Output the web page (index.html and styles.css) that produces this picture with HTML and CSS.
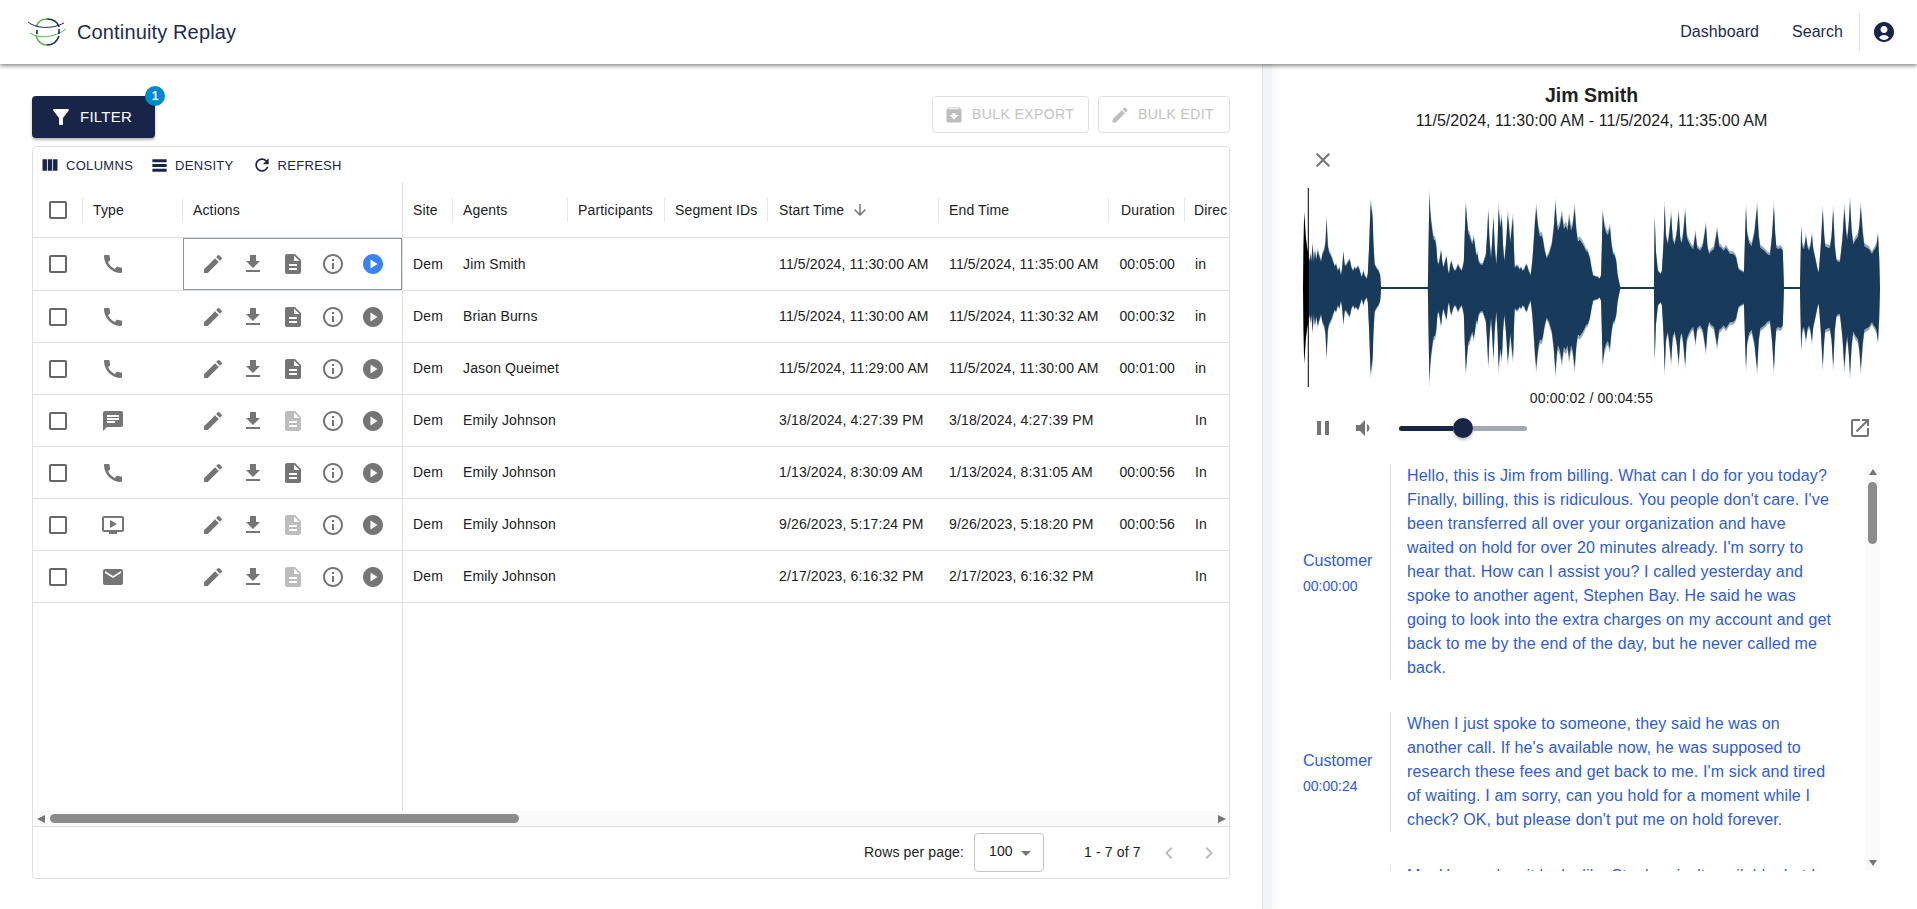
FILE: index.html
```html
<!DOCTYPE html>
<html lang="en">
<head>
<meta charset="utf-8">
<title>Continuity Replay</title>
<link rel="stylesheet" href="styles.css">
</head>
<body>
<svg class="sprite" aria-hidden="true">
  <symbol id="i-edit" viewBox="0 0 24 24"><path d="M3 17.25V21h3.75L17.81 9.94l-3.75-3.75L3 17.25zM20.71 7.04c.39-.39.39-1.02 0-1.41l-2.34-2.34a.9959.9959 0 0 0-1.41 0l-1.83 1.83 3.75 3.75 1.83-1.83z"/></symbol>
  <symbol id="i-down" viewBox="0 0 24 24"><path d="M5 20h14v-2H5v2zM19 9h-4V3H9v6H5l7 7 7-7z"/></symbol>
  <symbol id="i-doc" viewBox="0 0 24 24"><path d="M14 2H6c-1.1 0-1.99.9-1.99 2L4 20c0 1.1.89 2 1.99 2H18c1.1 0 2-.9 2-2V8l-6-6zm2 16H8v-2h8v2zm0-4H8v-2h8v2zm-3-5V3.5L18.5 9H13z"/></symbol>
  <symbol id="i-info" viewBox="0 0 24 24"><path d="M11 7h2v2h-2zm0 4h2v6h-2zm1-9C6.48 2 2 6.48 2 12s4.48 10 10 10 10-4.48 10-10S17.52 2 12 2zm0 18c-4.41 0-8-3.59-8-8s3.59-8 8-8 8 3.59 8 8-3.59 8-8 8z"/></symbol>
  <symbol id="i-play" viewBox="0 0 24 24"><path d="M12 2C6.48 2 2 6.48 2 12s4.48 10 10 10 10-4.48 10-10S17.52 2 12 2zM9.5 16.5v-9l7 4.5-7 4.5z"/></symbol>
  <symbol id="i-call" viewBox="0 0 24 24"><path d="M20.01 15.38c-1.23 0-2.42-.2-3.53-.56-.35-.12-.74-.03-1.01.24l-1.57 1.97c-2.83-1.35-5.48-3.9-6.89-6.83l1.95-1.66c.27-.28.35-.67.24-1.02-.37-1.11-.56-2.3-.56-3.53 0-.54-.45-.99-.99-.99H4.19C3.65 3 3 3.24 3 3.99 3 13.28 10.73 21 20.01 21c.71 0 .99-.63.99-1.18v-3.45c0-.54-.45-.99-.99-.99z"/></symbol>
  <symbol id="i-chat" viewBox="0 0 24 24"><path d="M20 2H4c-1.1 0-1.99.9-1.99 2L2 22l4-4h14c1.1 0 2-.9 2-2V4c0-1.1-.9-2-2-2zM6 9h12v2H6V9zm8 5H6v-2h8v2zm4-6H6V6h12v2z"/></symbol>
  <symbol id="i-video" viewBox="0 0 24 24"><path d="M21 3H3c-1.11 0-2 .89-2 2v12c0 1.1.89 2 2 2h5v2h8v-2h5c1.1 0 1.99-.9 1.99-2L23 5c0-1.11-.9-2-2-2zm0 14H3V5h18v12zm-5-6l-7 4V7z"/></symbol>
  <symbol id="i-mail" viewBox="0 0 24 24"><path d="M20 4H4c-1.1 0-1.99.9-1.99 2L2 18c0 1.1.9 2 2 2h16c1.1 0 2-.9 2-2V6c0-1.1-.9-2-2-2zm0 4l-8 5-8-5V6l8 5 8-5v2z"/></symbol>
  <symbol id="i-box" viewBox="0 0 24 24"><path d="M19 5v14H5V5h14m0-2H5c-1.1 0-2 .9-2 2v14c0 1.1.9 2 2 2h14c1.1 0 2-.9 2-2V5c0-1.1-.9-2-2-2z"/></symbol>
</svg>

<header class="topbar">
  <svg class="logo" viewBox="0 0 40 28" aria-hidden="true">
    <path class="logo-green" d="M9 9C11 3 16 1 20 1"/>
    <path class="logo-navy" d="M20 1C26 1 31 4 32 9"/>
    <path class="logo-green" d="M9 18C11 24 15 27 20 27"/>
    <path class="logo-navy" d="M20 27C26 27 30 24 32 18"/>
    <path class="logo-thin-navy" d="M1 4C8 10 24 12 37 5"/>
    <path class="logo-thin-green" d="M3 15C12 21 27 20 39 11"/>
    <path class="logo-navy" d="M10 12V16M32 11V16"/>
  </svg>
  <div class="brand">Continuity Replay</div>
  <nav class="topnav">
    <a class="nav-dash">Dashboard</a>
    <a class="nav-search">Search</a>
    <span class="nav-divider"></span>
    <svg class="nav-user" viewBox="0 0 24 24" aria-hidden="true"><path d="M12 2C6.48 2 2 6.48 2 12s4.48 10 10 10 10-4.48 10-10S17.52 2 12 2zm0 4c1.93 0 3.5 1.57 3.5 3.5S13.93 13 12 13s-3.5-1.57-3.5-3.5S10.07 6 12 6zm0 14c-2.03 0-3.8-1.01-4.9-2.54.93-1.38 2.4-2.3 4.9-2.46 2.5.16 3.97 1.08 4.9 2.46C15.8 18.99 14.03 20 12 20z"/></svg>
  </nav>
</header>

<main class="workspace">
  <section class="left-pane">
    <div class="actions-bar">
      <button class="filter-btn">
        <svg class="filter-icon" viewBox="0 0 24 24" aria-hidden="true"><path d="M4.25 5.61C6.27 8.2 10 13 10 13v6c0 .55.45 1 1 1h2c.55 0 1-.45 1-1v-6s3.72-4.8 5.74-7.39c.51-.66.04-1.61-.79-1.61H5.04c-.83 0-1.3.95-.79 1.61z"/></svg>
        FILTER
        <span class="filter-badge">1</span>
      </button>
      <div class="bulk-group">
        <button class="bulk-btn bulk-export">
          <svg viewBox="0 0 24 24" aria-hidden="true"><path d="M20.54 5.23l-1.39-1.68C18.88 3.21 18.47 3 18 3H6c-.47 0-.88.21-1.16.55L3.46 5.23C3.17 5.57 3 6.02 3 6.5V19c0 1.1.9 2 2 2h14c1.1 0 2-.9 2-2V6.5c0-.48-.17-.93-.46-1.27zM12 17.5L6.5 12H10v-2h4v2h3.5L12 17.5zM5.12 5l.81-1h12l.94 1H5.12z"/></svg>
          BULK EXPORT
        </button>
        <button class="bulk-btn bulk-edit">
          <svg viewBox="0 0 24 24" aria-hidden="true"><use href="#i-edit"/></svg>
          BULK EDIT
        </button>
      </div>
    </div>

    <div class="grid">
      <div class="grid-toolbar">
        <span class="tool tool-columns"><svg viewBox="0 0 24 24" aria-hidden="true"><path d="M14.67 5v14H9.33V5h5.34zm1 14H21V5h-5.33v14zm-7.34 0V5H3v14h5.33z"/></svg>COLUMNS</span>
        <span class="tool tool-density"><svg viewBox="0 0 24 24" aria-hidden="true"><path d="M21 8H3V4h18v4zm0 2H3v4h18v-4zm0 6H3v4h18v-4z"/></svg>DENSITY</span>
        <span class="tool tool-refresh"><svg viewBox="0 0 24 24" aria-hidden="true"><path d="M17.65 6.35C16.2 4.9 14.21 4 12 4c-4.42 0-7.99 3.58-7.99 8s3.57 8 7.99 8c3.73 0 6.84-2.55 7.73-6h-2.08c-.82 2.33-3.04 4-5.65 4-3.31 0-6-2.69-6-6s2.69-6 6-6c1.66 0 3.14.69 4.22 1.78L13 11h7V4l-2.35 2.35z"/></svg>REFRESH</span>
      </div>

      <div class="grid-body">
        <div class="pinned">
          <div class="head-row">
            <div class="hcell c-check"><svg class="ico check" aria-hidden="true"><use href="#i-box"/></svg></div>
            <div class="hcell c-type">Type</div>
            <div class="hcell c-actions">Actions</div>
          </div>
          <div class="row row-first">
            <div class="cell c-check"><svg class="ico check" aria-hidden="true"><use href="#i-box"/></svg></div>
            <div class="cell c-type"><svg class="ico" aria-hidden="true"><use href="#i-call"/></svg></div>
            <div class="cell c-actions focused"><svg class="ico" aria-hidden="true"><use href="#i-edit"/></svg><svg class="ico" aria-hidden="true"><use href="#i-down"/></svg><svg class="ico" aria-hidden="true"><use href="#i-doc"/></svg><svg class="ico" aria-hidden="true"><use href="#i-info"/></svg><svg class="ico playing" aria-hidden="true"><use href="#i-play"/></svg></div>
          </div>
          <div class="row">
            <div class="cell c-check"><svg class="ico check" aria-hidden="true"><use href="#i-box"/></svg></div>
            <div class="cell c-type"><svg class="ico" aria-hidden="true"><use href="#i-call"/></svg></div>
            <div class="cell c-actions"><svg class="ico" aria-hidden="true"><use href="#i-edit"/></svg><svg class="ico" aria-hidden="true"><use href="#i-down"/></svg><svg class="ico" aria-hidden="true"><use href="#i-doc"/></svg><svg class="ico" aria-hidden="true"><use href="#i-info"/></svg><svg class="ico" aria-hidden="true"><use href="#i-play"/></svg></div>
          </div>
          <div class="row">
            <div class="cell c-check"><svg class="ico check" aria-hidden="true"><use href="#i-box"/></svg></div>
            <div class="cell c-type"><svg class="ico" aria-hidden="true"><use href="#i-call"/></svg></div>
            <div class="cell c-actions"><svg class="ico" aria-hidden="true"><use href="#i-edit"/></svg><svg class="ico" aria-hidden="true"><use href="#i-down"/></svg><svg class="ico" aria-hidden="true"><use href="#i-doc"/></svg><svg class="ico" aria-hidden="true"><use href="#i-info"/></svg><svg class="ico" aria-hidden="true"><use href="#i-play"/></svg></div>
          </div>
          <div class="row">
            <div class="cell c-check"><svg class="ico check" aria-hidden="true"><use href="#i-box"/></svg></div>
            <div class="cell c-type"><svg class="ico" aria-hidden="true"><use href="#i-chat"/></svg></div>
            <div class="cell c-actions"><svg class="ico" aria-hidden="true"><use href="#i-edit"/></svg><svg class="ico" aria-hidden="true"><use href="#i-down"/></svg><svg class="ico off" aria-hidden="true"><use href="#i-doc"/></svg><svg class="ico" aria-hidden="true"><use href="#i-info"/></svg><svg class="ico" aria-hidden="true"><use href="#i-play"/></svg></div>
          </div>
          <div class="row">
            <div class="cell c-check"><svg class="ico check" aria-hidden="true"><use href="#i-box"/></svg></div>
            <div class="cell c-type"><svg class="ico" aria-hidden="true"><use href="#i-call"/></svg></div>
            <div class="cell c-actions"><svg class="ico" aria-hidden="true"><use href="#i-edit"/></svg><svg class="ico" aria-hidden="true"><use href="#i-down"/></svg><svg class="ico" aria-hidden="true"><use href="#i-doc"/></svg><svg class="ico" aria-hidden="true"><use href="#i-info"/></svg><svg class="ico" aria-hidden="true"><use href="#i-play"/></svg></div>
          </div>
          <div class="row">
            <div class="cell c-check"><svg class="ico check" aria-hidden="true"><use href="#i-box"/></svg></div>
            <div class="cell c-type"><svg class="ico" aria-hidden="true"><use href="#i-video"/></svg></div>
            <div class="cell c-actions"><svg class="ico" aria-hidden="true"><use href="#i-edit"/></svg><svg class="ico" aria-hidden="true"><use href="#i-down"/></svg><svg class="ico off" aria-hidden="true"><use href="#i-doc"/></svg><svg class="ico" aria-hidden="true"><use href="#i-info"/></svg><svg class="ico" aria-hidden="true"><use href="#i-play"/></svg></div>
          </div>
          <div class="row">
            <div class="cell c-check"><svg class="ico check" aria-hidden="true"><use href="#i-box"/></svg></div>
            <div class="cell c-type"><svg class="ico" aria-hidden="true"><use href="#i-mail"/></svg></div>
            <div class="cell c-actions"><svg class="ico" aria-hidden="true"><use href="#i-edit"/></svg><svg class="ico" aria-hidden="true"><use href="#i-down"/></svg><svg class="ico off" aria-hidden="true"><use href="#i-doc"/></svg><svg class="ico" aria-hidden="true"><use href="#i-info"/></svg><svg class="ico" aria-hidden="true"><use href="#i-play"/></svg></div>
          </div>
        </div>

        <div class="scroller">
          <div class="head-row">
            <div class="hcell c-site">Site</div>
            <div class="hcell c-agents">Agents</div>
            <div class="hcell c-part">Participants</div>
            <div class="hcell c-seg">Segment IDs</div>
            <div class="hcell c-start">Start Time<svg class="sort-arrow" viewBox="0 0 24 24" aria-hidden="true"><path d="M20 12l-1.41-1.41L13 16.17V4h-2v12.17l-5.58-5.59L4 12l8 8 8-8z"/></svg></div>
            <div class="hcell c-end">End Time</div>
            <div class="hcell c-dur">Duration</div>
            <div class="hcell c-dir">Direc</div>
          </div>
          <div class="row row-first"><div class="cell c-site">Dem</div><div class="cell c-agents">Jim Smith</div><div class="cell c-part"></div><div class="cell c-seg"></div><div class="cell c-start">11/5/2024, 11:30:00 AM</div><div class="cell c-end">11/5/2024, 11:35:00 AM</div><div class="cell c-dur">00:05:00</div><div class="cell c-dir">in</div></div>
          <div class="row"><div class="cell c-site">Dem</div><div class="cell c-agents">Brian Burns</div><div class="cell c-part"></div><div class="cell c-seg"></div><div class="cell c-start">11/5/2024, 11:30:00 AM</div><div class="cell c-end">11/5/2024, 11:30:32 AM</div><div class="cell c-dur">00:00:32</div><div class="cell c-dir">in</div></div>
          <div class="row"><div class="cell c-site">Dem</div><div class="cell c-agents">Jason Queimet</div><div class="cell c-part"></div><div class="cell c-seg"></div><div class="cell c-start">11/5/2024, 11:29:00 AM</div><div class="cell c-end">11/5/2024, 11:30:00 AM</div><div class="cell c-dur">00:01:00</div><div class="cell c-dir">in</div></div>
          <div class="row"><div class="cell c-site">Dem</div><div class="cell c-agents">Emily Johnson</div><div class="cell c-part"></div><div class="cell c-seg"></div><div class="cell c-start">3/18/2024, 4:27:39 PM</div><div class="cell c-end">3/18/2024, 4:27:39 PM</div><div class="cell c-dur"></div><div class="cell c-dir">In</div></div>
          <div class="row"><div class="cell c-site">Dem</div><div class="cell c-agents">Emily Johnson</div><div class="cell c-part"></div><div class="cell c-seg"></div><div class="cell c-start">1/13/2024, 8:30:09 AM</div><div class="cell c-end">1/13/2024, 8:31:05 AM</div><div class="cell c-dur">00:00:56</div><div class="cell c-dir">In</div></div>
          <div class="row"><div class="cell c-site">Dem</div><div class="cell c-agents">Emily Johnson</div><div class="cell c-part"></div><div class="cell c-seg"></div><div class="cell c-start">9/26/2023, 5:17:24 PM</div><div class="cell c-end">9/26/2023, 5:18:20 PM</div><div class="cell c-dur">00:00:56</div><div class="cell c-dir">In</div></div>
          <div class="row"><div class="cell c-site">Dem</div><div class="cell c-agents">Emily Johnson</div><div class="cell c-part"></div><div class="cell c-seg"></div><div class="cell c-start">2/17/2023, 6:16:32 PM</div><div class="cell c-end">2/17/2023, 6:16:32 PM</div><div class="cell c-dur"></div><div class="cell c-dir">In</div></div>
        </div>
      </div>

      <div class="hscroll">
        <span class="arrow-left"></span>
        <span class="hthumb"></span>
        <span class="arrow-right"></span>
      </div>

      <div class="grid-footer">
        <span class="rows-label">Rows per page:</span>
        <span class="rows-select">100<svg viewBox="0 0 24 24" aria-hidden="true"><path d="M7 10l5 5 5-5z"/></svg></span>
        <span class="page-range">1 - 7 of 7</span>
        <svg class="page-btn" viewBox="0 0 24 24" aria-hidden="true"><path d="M15.41 7.41L14 6l-6 6 6 6 1.41-1.41L10.83 12z"/></svg>
        <svg class="page-btn page-next" viewBox="0 0 24 24" aria-hidden="true"><path d="M10 6L8.59 7.41 13.17 12l-4.58 4.59L10 18l6-6z"/></svg>
      </div>
    </div>
  </section>

  <div class="splitter"></div>

  <section class="right-pane">
    <h1 class="call-name">Jim Smith</h1>
    <p class="call-range">11/5/2024, 11:30:00 AM - 11/5/2024, 11:35:00 AM</p>
    <svg class="close-icon" viewBox="0 0 24 24" aria-hidden="true"><path d="M19 6.41L17.59 5 12 10.59 6.41 5 5 6.41 10.59 12 5 17.59 6.41 19 12 13.41 17.59 19 19 17.59 13.41 12z"/></svg>

    <svg class="wave" viewBox="33 25 1442 597" preserveAspectRatio="none" aria-hidden="true">
      <defs>
        <path id="wave-top" d="M47 325 47 225 50 240 52 215 54 240 57 185 60 240 63 205 66 235 70 205 74 225 78 240 82 215 86 205 89 185 92 105 95 190 98 210 104 225 108 240 112 255 116 250 120 270 124 260 128 285 131 260 134 210 137 250 140 255 144 245 150 235 154 260 158 270 162 260 165 265 169 258 172 258 176 275 180 290 184 270 187 285 192 295 195 280 198 200 202 55 205 80 207 100 209 180 212 250 217 262 222 270 226 285 228 322 345 322 347 170 349 25 351 80 353 110 357 150 360 170 363 170 366 190 369 240 372 250 375 230 378 205 381 240 384 260 388 240 392 225 395 265 398 280 401 250 404 240 408 260 412 270 416 265 420 250 425 262 430 270 435 240 437 160 440 60 443 110 446 150 449 155 452 170 456 185 460 165 463 190 466 220 469 215 472 240 477 250 482 250 486 235 490 220 493 160 496 80 499 170 503 230 506 170 509 100 512 190 516 250 519 190 522 70 526 130 530 100 533 190 536 240 540 190 545 90 548 130 551 180 555 130 558 100 560 190 562 260 566 255 570 255 574 265 578 260 582 270 586 265 589 255 592 250 597 270 602 285 606 240 610 170 613 110 616 70 620 125 625 160 628 155 632 165 637 205 642 230 648 215 655 185 660 130 664 55 667 110 670 140 675 125 680 90 685 135 690 125 694 140 698 100 703 140 707 125 712 70 716 140 720 175 725 170 730 180 735 190 740 205 745 210 750 230 754 260 758 285 764 288 770 290 774 295 778 285 780 180 782 85 786 125 790 145 795 155 800 130 804 185 808 215 812 220 816 240 819 280 822 300 826 322 910 322 911 200 912 100 915 210 920 270 927 280 930 270 934 180 937 60 940 160 945 185 950 130 953 90 957 170 962 185 967 150 972 85 976 170 980 180 984 140 988 80 992 160 996 175 1002 190 1008 200 1014 150 1018 195 1025 205 1032 190 1040 125 1044 195 1048 215 1054 205 1060 200 1064 170 1068 140 1073 190 1078 195 1084 205 1090 195 1095 205 1100 215 1108 215 1115 225 1119 250 1122 265 1128 270 1135 275 1137 190 1140 70 1143 150 1148 180 1154 190 1161 150 1168 65 1172 160 1176 195 1181 200 1186 205 1193 215 1200 220 1205 160 1210 65 1213 150 1216 195 1221 200 1226 195 1232 205 1235 322 1275 322 1277 200 1278 130 1281 190 1285 200 1290 160 1294 195 1298 205 1302 185 1305 155 1308 200 1315 240 1319 265 1322 275 1327 190 1332 75 1335 150 1338 190 1344 195 1350 195 1354 160 1358 75 1362 190 1366 235 1370 240 1375 240 1381 170 1386 70 1390 140 1393 170 1397 120 1400 50 1404 140 1408 185 1414 170 1420 160 1424 120 1427 65 1432 150 1436 190 1442 195 1448 200 1452 210 1455 215 1459 205 1462 200 1466 190 1470 155 1473 230 1475 325Z"/>
        <path id="wave-head" d="M33 325 34 200 36 97 38 130 40 170 43 200 47 225 47 325Z"/>
      </defs>
      <g class="wave-soft">
        <use href="#wave-top"/>
        <use href="#wave-top" transform="matrix(1 0 0 -1 0 650)"/>
      </g>
      <g class="wave-fill">
        <use href="#wave-top" transform="matrix(1 0 0 .93 0 22.75)"/>
        <use href="#wave-top" transform="matrix(1 0 0 -.93 0 627.25)"/>
      </g>
      <use class="wave-played" href="#wave-head"/>
      <use class="wave-played" href="#wave-head" transform="matrix(1 0 0 -1 0 650)"/>
      <rect class="wave-played" x="45" y="25" width="2.5" height="597"/>
    </svg>

    <div class="clock">00:00:02 / 00:04:55</div>

    <div class="player">
      <svg class="player-icon" viewBox="0 0 24 24" aria-hidden="true"><path d="M6 19h4V5H6v14zm8-14v14h4V5h-4z"/></svg>
      <svg class="player-icon volume" viewBox="0 0 24 24" aria-hidden="true"><path d="M18.5 12c0-1.77-1.02-3.29-2.5-4.03v8.05c1.48-.73 2.5-2.25 2.5-4.02zM5 9v6h4l5 5V4L9 9H5z"/></svg>
      <div class="slider">
        <span class="slider-fill"></span>
        <span class="slider-thumb"></span>
        <span class="slider-rest"></span>
      </div>
      <svg class="player-icon popout" viewBox="0 0 24 24" aria-hidden="true"><path d="M19 19H5V5h7V3H5c-1.11 0-2 .9-2 2v14c0 1.1.89 2 2 2h14c1.1 0 2-.9 2-2v-7h-2v7zM14 3v2h3.59l-9.83 9.83 1.41 1.41L19 6.41V10h2V3h-7z"/></svg>
    </div>

    <div class="transcript">
      <div class="turns">
        <div class="turn">
          <div class="speaker"><span class="speaker-name">Customer</span><span class="speaker-time">00:00:00</span></div>
          <p class="speech">Hello, this is Jim from billing. What can I do for you today? Finally, billing, this is ridiculous. You people don't care. I've been transferred all over your organization and have waited on hold for over 20 minutes already. I'm sorry to hear that. How can I assist you? I called yesterday and spoke to another agent, Stephen Bay. He said he was going to look into the extra charges on my account and get back to me by the end of the day, but he never called me back.</p>
        </div>
        <div class="turn">
          <div class="speaker"><span class="speaker-name">Customer</span><span class="speaker-time">00:00:24</span></div>
          <p class="speech">When I just spoke to someone, they said he was on another call. If he's available now, he was supposed to research these fees and get back to me. I'm sick and tired of waiting. I am sorry, can you hold for a moment while I check? OK, but please don't put me on hold forever.</p>
        </div>
        <div class="turn">
          <div class="speaker"></div>
          <p class="speech">Me: Hm, and so it looks like Stephen isn't available, but I can help you with that today.</p>
        </div>
      </div>
      <div class="vscroll">
        <span class="arrow-up"></span>
        <span class="vthumb"></span>
        <span class="arrow-down"></span>
      </div>
    </div>
  </section>
</main>
</body>
</html>
```
FILE: styles.css
```css
* { box-sizing: border-box; }
html, body { margin: 0; height: 100%; overflow: hidden; }
body { font-family: "Liberation Sans", Arial, sans-serif; font-size: 14px; letter-spacing: .14px; color: #212121; background: #fff; display: flex; flex-direction: column; }
.sprite { width: 0; height: 0; position: absolute; }
p, h1 { margin: 0; }
button { font-family: inherit; }

/* top bar */
.topbar { height: 64px; flex: none; display: flex; align-items: center; padding-left: 27px; background: #fff; box-shadow: 0 2px 4px rgba(0,0,0,.45); position: relative; z-index: 2; }
.logo { width: 40px; height: 28px; fill: none; margin-right: 10px; }
.logo-green { stroke: #5cb54a; stroke-width: 1.6; }
.logo-navy { stroke: #1f2f5c; stroke-width: 1.6; }
.logo-thin-navy { stroke: #1f2f5c; stroke-width: 1; }
.logo-thin-green { stroke: #5cb54a; stroke-width: 1; }
.brand { font-size: 20px; color: #1c2a50; }
.topnav { margin-left: auto; display: flex; align-items: center; color: #1c2a50; font-size: 16px; letter-spacing: .05px; }
.nav-dash { margin-right: 33px; }
.nav-divider { width: 1px; height: 38px; background: #e0e0e0; margin: 0 12px 0 16px; }
.nav-user { width: 24px; height: 24px; fill: #182549; margin-right: 21px; }

/* layout */
.workspace { flex: 1; display: flex; min-height: 0; }
.left-pane { width: 1262px; flex: none; padding: 32px 32px 0 32px; }
.splitter { width: 10px; flex: none; background: #f1f5f9; border-left: 1px solid #e3e3e3; box-shadow: 4px 0 10px rgba(0,0,0,.04); }
.right-pane { flex: 1; min-width: 0; padding: 18px 37px 0 31px; }

/* action bar */
.actions-bar { display: flex; justify-content: space-between; align-items: flex-start; height: 42px; margin-bottom: 8px; }
.filter-btn { position: relative; width: 123px; height: 42px; border: 0; border-radius: 4px; background: #182549; color: #fff; font-size: 15px; letter-spacing: .25px; display: flex; align-items: center; gap: 7px; padding: 0 0 2px 17px; box-shadow: 0 2px 3px rgba(0,0,0,.3); }
.filter-icon { width: 24px; height: 24px; fill: #fff; margin-top: 2px; }
.filter-badge { position: absolute; top: -10px; right: -10px; width: 20px; height: 20px; border-radius: 50%; background: #0288d1; color: #fff; font-size: 12px; font-weight: 700; letter-spacing: 0; display: flex; align-items: center; justify-content: center; }
.bulk-group { display: flex; gap: 9px; }
.bulk-btn { height: 37px; background: #fff; border: 1px solid #e0e0e0; border-radius: 4px; color: #c2c2c2; font-size: 14px; letter-spacing: .4px; display: flex; align-items: center; padding: 0 0 1px; }
.bulk-btn svg { width: 20px; height: 20px; fill: #bdbdbd; margin: 1px 8px 0 11px; }
.bulk-export { width: 157px; }
.bulk-edit { width: 132px; }

/* grid */
.grid { height: 733px; border: 1px solid #e0e0e0; border-radius: 4px; display: flex; flex-direction: column; overflow: hidden; }
.grid-toolbar { height: 35px; flex: none; display: flex; align-items: center; color: #182549; font-size: 13px; letter-spacing: .3px; padding: 1px 0 0 7px; }
.tool { display: flex; align-items: center; }
.tool svg { fill: #182549; width: 20px; height: 20px; margin-right: 6px; }
.tool-density { margin-left: 17px; }
.tool-refresh { margin-left: 18px; }
.tool-density svg { width: 19px; height: 19px; margin-right: 6px; }
.grid-body { flex: 1; min-height: 0; display: flex; }
.pinned { width: 370px; flex: none; border-right: 1px solid #e0e0e0; }
.scroller { flex: 1; min-width: 0; overflow: hidden; }
.head-row { height: 56px; display: flex; align-items: center; border-bottom: 1px solid #e0e0e0; }
.row { height: 52px; display: flex; align-items: center; border-bottom: 1px solid #e0e0e0; }
.row-first { height: 53px; }
.scroller .row:not(.row-first) .cell { padding-bottom: 1px; }
.hcell { height: 24px; display: flex; align-items: center; padding-left: 10px; border-right: 1px solid #e8e8e8; flex: none; white-space: nowrap; }
.cell { height: 100%; display: flex; align-items: center; padding-left: 10px; flex: none; white-space: nowrap; }
.scroller .hcell:last-child { border-right: 0; }
.c-check { width: 50px; padding-left: 13px; }
.c-type { width: 100px; }
.c-actions { width: 219px; }
.hcell.c-actions { border-right: 0; }
.cell.c-type { padding-left: 18px; }
.cell.c-actions { padding-left: 18px; gap: 16px; }
.focused { height: 52px; border: 1px solid #8a93a8; padding-left: 17px !important; }
.c-site { width: 50px; }
.c-agents { width: 115px; }
.c-part { width: 97px; }
.c-seg { width: 103px; }
.c-start { width: 171px; padding-left: 11px; }
.c-end { width: 170px; }
.c-dur { width: 76px; justify-content: flex-end; padding-right: 10px; padding-left: 0; }
.hcell.c-dur { padding-right: 9px; }
.c-dir { width: 44px; overflow: hidden; }
.hcell.c-dir { padding-left: 9px; }
.ico { width: 24px; height: 24px; fill: #757575; flex: none; }
.ico.check { fill: #666; }
.ico.off { fill: #bdbdbd; }
.ico.playing { fill: #3a82f7; }
.sort-arrow { width: 18px; height: 18px; fill: #757575; margin-left: 7px; }

/* horizontal scrollbar */
.hscroll { height: 16px; flex: none; background: #fafafa; border-bottom: 1px solid #e0e0e0; display: flex; align-items: center; padding-left: 4px; }
.arrow-left { width: 0; height: 0; border: 4.5px solid transparent; border-left-width: 0; border-right: 8px solid #757575; margin-right: 5px; }
.hthumb { width: 469px; height: 9px; border-radius: 5px; background: #8b8b8b; }
.arrow-right { width: 0; height: 0; border: 4.5px solid transparent; border-right-width: 0; border-left: 8px solid #757575; margin-left: auto; margin-right: 3px; }

/* footer */
.grid-footer { height: 51px; flex: none; display: flex; align-items: center; padding-left: 831px; }
.rows-label, .page-range { padding-bottom: 2px; }
.rows-select { width: 70px; height: 39px; margin-left: 10px; border: 1px solid #c4c4c4; border-radius: 4px; display: flex; align-items: center; padding: 0 0 3px 14px; }
.rows-select svg { width: 24px; height: 24px; fill: #757575; margin: 3px 0 0 1px; }
.page-range { margin-left: 40px; }
.page-btn { width: 24px; height: 24px; fill: #bdbdbd; margin-left: 16px; }

/* right pane */
.call-name { font-size: 19.5px; font-weight: 700; line-height: 27px; letter-spacing: 0; text-align: center; color: #212121; }
.call-range { font-size: 16px; line-height: 24px; letter-spacing: .05px; text-align: center; }
.close-icon { display: block; width: 24px; height: 24px; fill: #757575; margin: 15px 0 16px 8px; }
.wave { display: block; width: 577px; height: 199px; }
.wave-fill { fill: #183b5c; }
.wave-soft { fill: #183b5c; opacity: .45; }
.wave-played { fill: #000; }
.clock { font-size: 14px; line-height: 20px; text-align: center; margin-top: 1px; }
.player { height: 24px; margin-top: 8px; display: flex; align-items: center; }
.player-icon { width: 24px; height: 24px; fill: #757575; flex: none; margin-left: 8px; }
.volume { margin-left: 16px; }
.slider { width: 128px; margin-left: 24px; display: flex; align-items: center; }
.slider-fill { width: 54px; height: 5px; background: #182549; border-radius: 3px 0 0 3px; }
.slider-thumb { width: 20px; height: 20px; border-radius: 50%; background: #182549; flex: none; box-shadow: 0 2px 3px rgba(0,0,0,.25); }
.slider-rest { flex: 1; height: 5px; background: #a3a8b6; border-radius: 0 3px 3px 0; }
.popout { margin-left: auto; margin-right: 8px; }

/* transcript */
.transcript { height: 407px; margin-top: 24px; display: flex; }
.turns { flex: 1; min-width: 0; overflow: hidden; }
.turn { display: flex; align-items: stretch; margin-bottom: 32px; }
.speaker { width: 87px; flex: none; display: flex; flex-direction: column; justify-content: center; gap: 3px; color: #2f5bd8; letter-spacing: 0; }
.speaker-name { font-size: 16px; line-height: 24px; }
.speaker-time { font-size: 14px; line-height: 20px; }
.speech { width: 444px; font-size: 16px; line-height: 24px; letter-spacing: .15px; color: #2f5bd8; border-left: 1px solid #e0e0e0; padding: 0 0 0 16px; }
.vscroll { width: 15px; flex: none; background: #fafafa; display: flex; flex-direction: column; align-items: center; position: relative; padding-top: 5px; }
.arrow-up { width: 0; height: 0; border: 4.5px solid transparent; border-top-width: 0; border-bottom: 6px solid #757575; }
.vthumb { width: 9px; height: 62px; border-radius: 5px; background: #8b8b8b; margin-top: 7px; }
.arrow-down { width: 0; height: 0; border: 4.5px solid transparent; border-bottom-width: 0; border-top: 6px solid #757575; margin-top: auto; margin-bottom: 5px; }
```
